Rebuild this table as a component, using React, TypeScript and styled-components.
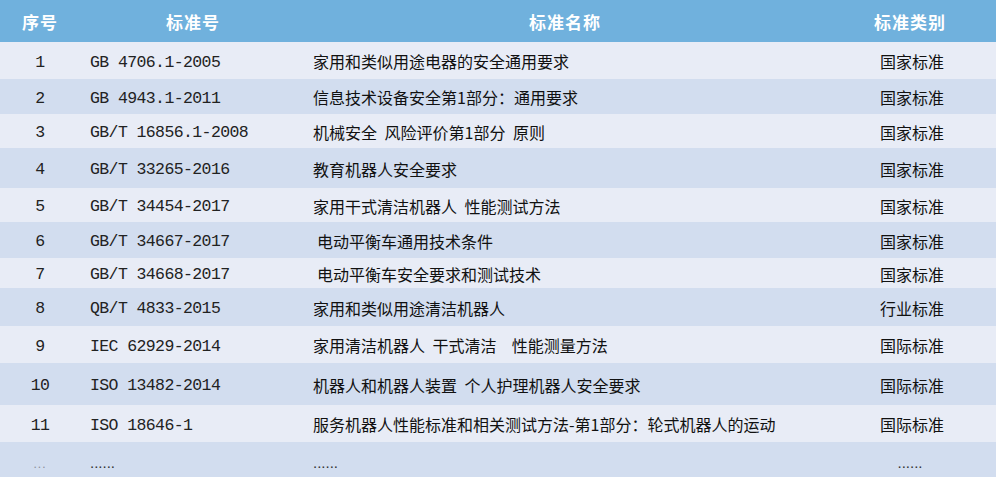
import React from "react";
import styled, { createGlobalStyle } from "styled-components";

const GlobalStyle = createGlobalStyle`
  html, body {
    margin: 0;
    padding: 0;
    overflow: hidden;
    background: #ffffff;
  }
`;

type Standard = {
  no: string;
  code: string;
  name: string;
  kind: string;
  height: number;
  indent?: number;
};

const standards: Standard[] = [
  { no: "1", code: "GB 4706.1-2005", name: "家用和类似用途电器的安全通用要求", kind: "国家标准", height: 37 },
  { no: "2", code: "GB 4943.1-2011", name: "信息技术设备安全第1部分：通用要求", kind: "国家标准", height: 35 },
  { no: "3", code: "GB/T 16856.1-2008", name: "机械安全 风险评价第1部分 原则", kind: "国家标准", height: 34 },
  { no: "4", code: "GB/T 33265-2016", name: "教育机器人安全要求", kind: "国家标准", height: 40 },
  { no: "5", code: "GB/T 34454-2017", name: "家用干式清洁机器人 性能测试方法", kind: "国家标准", height: 34 },
  { no: "6", code: "GB/T 34667-2017", name: "电动平衡车通用技术条件", kind: "国家标准", height: 36, indent: 4 },
  { no: "7", code: "GB/T 34668-2017", name: "电动平衡车安全要求和测试技术", kind: "国家标准", height: 30, indent: 4 },
  { no: "8", code: "QB/T 4833-2015", name: "家用和类似用途清洁机器人", kind: "行业标准", height: 38 },
  { no: "9", code: "IEC 62929-2014", name: "家用清洁机器人 干式清洁  性能测量方法", kind: "国际标准", height: 37 },
  { no: "10", code: "ISO 13482-2014", name: "机器人和机器人装置 个人护理机器人安全要求", kind: "国际标准", height: 42 },
  { no: "11", code: "ISO 18646-1", name: "服务机器人性能标准和相关测试方法-第1部分：轮式机器人的运动", kind: "国际标准", height: 37 },
];

const Table = styled.div`
  width: 996px;
  display: flex;
  flex-direction: column;
  font-family: "Noto Sans CJK SC", "Noto Sans", sans-serif;
`;

const Row = styled.div<{ $height: number; $alt?: boolean }>`
  display: grid;
  grid-template-columns: 80px 226px 518px 1fr;
  height: ${(p) => p.$height}px;
  align-items: center;
  background: ${(p) => (p.$alt ? "#d2ddef" : "#e8ecf6")};
`;

const HeaderRow = styled(Row)`
  background: #70b1dd;
`;

const HeadCell = styled.div`
  text-align: center;
  color: #ffffff;
  font-size: 17px;
  font-weight: 700;
  letter-spacing: 1px;
`;

const NoCell = styled.div`
  padding-top: 3px;
  text-align: center;
  font-family: "Liberation Mono", monospace;
  font-size: 16.5px;
  letter-spacing: -0.6px;
  color: #222222;
`;

const CodeCell = styled.div`
  padding-top: 3px;
  padding-left: 10px;
  font-family: "Liberation Mono", monospace;
  font-size: 16.5px;
  letter-spacing: -0.6px;
  color: #222222;
  white-space: pre;
`;

const NameCell = styled.div<{ $indent?: number }>`
  padding-top: 1px;
  padding-left: ${(p) => 7 + (p.$indent ?? 0)}px;
  font-size: 16px;
  color: #111111;
  white-space: pre;
  word-spacing: 4px;
`;

const KindCell = styled.div`
  padding-top: 1px;
  padding-left: 4px;
  text-align: center;
  font-size: 16px;
  color: #111111;
`;

const Dots = styled.div<{ $center?: boolean; $faint?: boolean; $pad?: number }>`
  align-self: end;
  padding-bottom: 6px;
  padding-left: ${(p) => (p.$center ? 0 : p.$pad ?? 10)}px;
  text-align: ${(p) => (p.$center ? "center" : "left")};
  font-family: "Liberation Sans", sans-serif;
  font-size: ${(p) => (p.$faint ? "12px" : "15px")};
  letter-spacing: ${(p) => (p.$faint ? "1px" : "0")};
  color: ${(p) => (p.$faint ? "#8a8f99" : "#333333")};
`;

export default function App() {
  return (
    <>
      <GlobalStyle />
      <Table>
        <HeaderRow $height={42}>
          <HeadCell>序号</HeadCell>
          <HeadCell>标准号</HeadCell>
          <HeadCell>标准名称</HeadCell>
          <HeadCell>标准类别</HeadCell>
        </HeaderRow>
        {standards.map((s, i) => (
          <Row key={s.no} $height={s.height} $alt={i % 2 === 1}>
            <NoCell>{s.no}</NoCell>
            <CodeCell>{s.code}</CodeCell>
            <NameCell $indent={s.indent}>{s.name}</NameCell>
            <KindCell>{s.kind}</KindCell>
          </Row>
        ))}
        <Row $height={35} $alt>
          <Dots $center $faint>...</Dots>
          <Dots>......</Dots>
          <Dots $pad={7}>......</Dots>
          <Dots $center>......</Dots>
        </Row>
      </Table>
    </>
  );
}
